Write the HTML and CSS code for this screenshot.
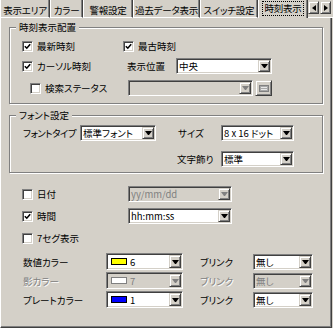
FILE: index.html
```html
<!DOCTYPE html>
<html lang="ja">
<head>
<meta charset="utf-8">
<link rel="stylesheet" href="styles.css">
</head>
<body>
<div class="win">
  <div class="tabs">
    <div class="tab w50">表示エリア</div>
    <div class="tab w33">カラー</div>
    <div class="tab w50">警報設定</div>
    <div class="tab w67">過去データ表示</div>
    <div class="tab w58">スイッチ設定</div>
    <div class="tab sel w50"><span class="focus">時刻表示</span></div>
    <div class="tabfill">
      <span class="arr"><span class="tri-l"></span></span>
      <span class="arr"><span class="tri-r"></span></span>
    </div>
  </div>
  <div class="panel">
    <div class="group g1">
      <div class="legend">時刻表示配置</div>
      <div class="row h14 mt6 pl12">
        <label class="chk cw101"><span class="box"><svg viewBox="0 0 7 7" width="7" height="7"><path d="M0.8 3.2 L2.8 5.2 L6.2 1.3" fill="none" stroke="#000" stroke-width="1.6"/></svg></span>最新時刻</label>
        <label class="chk"><span class="box"><svg viewBox="0 0 7 7" width="7" height="7"><path d="M0.8 3.2 L2.8 5.2 L6.2 1.3" fill="none" stroke="#000" stroke-width="1.6"/></svg></span>最古時刻</label>
      </div>
      <div class="row h16 mt5 pl12">
        <label class="chk cw105"><span class="box"><svg viewBox="0 0 7 7" width="7" height="7"><path d="M0.8 3.2 L2.8 5.2 L6.2 1.3" fill="none" stroke="#000" stroke-width="1.6"/></svg></span>カーソル時刻</label>
        <span class="lbl lw49">表示位置</span>
        <div class="combo cb96"><span class="val">中央</span><span class="dd"></span></div>
      </div>
      <div class="row h16 mt6 pl20">
        <label class="chk cw98"><span class="box"></span>検索ステータス</label>
        <div class="combo dis cb125"><span class="val"></span><span class="dd"></span></div>
        <span class="btn"><svg viewBox="0 0 10 7" width="10" height="7"><rect x="0.5" y="0.5" width="9" height="6" fill="#a8a8a8" stroke="#808080"/><path d="M2 2.5H8M2 4.5H8" stroke="#e8e8e8" stroke-width="1"/></svg></span>
      </div>
    </div>

    <div class="group g2">
      <div class="legend">フォント設定</div>
      <div class="row h16 mt4 pl13">
        <span class="lbl lw57">フォントタイプ</span>
        <div class="combo cb76"><span class="val">標準フォント</span><span class="dd"></span></div>
        <span class="lbl lw43 ml22">サイズ</span>
        <div class="combo cb73"><span class="val">8 x 16 ドット</span><span class="dd"></span></div>
      </div>
      <div class="row h16 mt10 pl167">
        <span class="lbl lw44">文字飾り</span>
        <div class="combo cb73"><span class="val">標準</span><span class="dd"></span></div>
      </div>
    </div>

    <div class="row h16 mt13 pl21">
      <label class="chk cw106"><span class="box"></span>日付</label>
      <div class="combo dis cb104"><span class="val">yy/mm/dd</span><span class="dd"></span></div>
    </div>
    <div class="row h16 mt6 pl21">
      <label class="chk cw106"><span class="box"><svg viewBox="0 0 7 7" width="7" height="7"><path d="M0.8 3.2 L2.8 5.2 L6.2 1.3" fill="none" stroke="#000" stroke-width="1.6"/></svg></span>時間</label>
      <div class="combo cb104"><span class="val">hh:mm:ss</span><span class="dd"></span></div>
    </div>
    <div class="row h14 mt7 pl21">
      <label class="chk"><span class="box"></span>7セグ表示</label>
    </div>

    <div class="row h17 mt8 pl22">
      <span class="lbl lw83">数値カラー</span>
      <div class="combo cb77 tall"><span class="val"><span class="sw yellow"></span>6</span><span class="dd"></span></div>
      <span class="lbl lw53 ml17">ブリンク</span>
      <div class="combo cb60"><span class="val">無し</span><span class="dd"></span></div>
    </div>
    <div class="row h17 mt2 pl22">
      <span class="lbl lw83 off">影カラー</span>
      <div class="combo dis cb77 tall"><span class="val"><span class="sw white"></span>7</span><span class="dd"></span></div>
      <span class="lbl lw53 ml17 off">ブリンク</span>
      <div class="combo dis cb60"><span class="val">無し</span><span class="dd"></span></div>
    </div>
    <div class="row h17 mt2 pl22">
      <span class="lbl lw83">プレートカラー</span>
      <div class="combo cb77 tall"><span class="val"><span class="sw blue"></span>1</span><span class="dd"></span></div>
      <span class="lbl lw53 ml17">ブリンク</span>
      <div class="combo cb60"><span class="val">無し</span><span class="dd"></span></div>
    </div>
  </div>
</div>
</body>
</html>
```

FILE: styles.css
```css
* { box-sizing: border-box; }
html, body { margin: 0; padding: 0; }
body {
  background: #d4d0c8;
  font-family: "Noto Sans CJK JP", "Noto Sans", sans-serif;
  font-size: 9.5px;
  line-height: 12px;
  color: #000;
  font-feature-settings: "palt";
}
.win {
  width: 333px;
  height: 328px;
  overflow: hidden;
  background: #d4d0c8;
}

/* tabs */
.tabs {
  display: flex;
  height: 18px;
}
.tab {
  flex: none;
  height: 18px;
  padding-top: 2px;
  border-left: 1px solid #fff;
  border-right: 1px solid #404040;
  border-bottom: 1px solid #fff;
  box-shadow: inset -1px 0 0 #808080;
  display: flex;
  justify-content: center;
  align-items: center;
  white-space: nowrap;
  letter-spacing: -0.2px;
}
.tab.sel {
  border-bottom: none;
  padding-top: 1px;
  align-items: flex-start;
}
.focus {
  display: block;
  height: 15px;
  padding: 0 1px;
  border: 1px dotted #000;
  line-height: 13px;
}
.w50 { width: 50px; }
.w33 { width: 33px; }
.w67 { width: 67px; }
.w58 { width: 58px; }
.tabfill {
  flex: 1;
  height: 18px;
  border-bottom: 1px solid #fff;
  display: flex;
  align-items: flex-start;
  gap: 1px;
  padding-top: 1px;
}
.arr {
  width: 11px;
  height: 13px;
  background: #d4d0c8;
  border: 1px solid;
  border-color: #d4d0c8 #404040 #404040 #d4d0c8;
  box-shadow: inset 1px 1px 0 #fff, inset -1px -1px 0 #808080;
  display: flex;
  align-items: center;
  justify-content: center;
}
.tri-l {
  width: 0; height: 1px;
  border-top: 3px solid transparent;
  border-bottom: 3px solid transparent;
  border-right: 4px solid #000;
}
.tri-r {
  width: 0; height: 1px;
  border-top: 3px solid transparent;
  border-bottom: 3px solid transparent;
  border-left: 4px solid #000;
}

/* panel */
.panel {
  width: 332px;
  height: 310px;
  border-left: 1px solid #fff;
  border-right: 1px solid #404040;
  border-bottom: 1px solid #404040;
  box-shadow: inset -1px -1px 0 #808080;
  overflow: hidden;
}
.group {
  width: 314px;
  margin-left: 8px;
  border: 1px solid #808080;
  box-shadow: inset 1px 1px 0 #fff, 1px 1px 0 #fff;
}
.g1 { margin-top: 9px; height: 77px; }
.g2 { margin-top: 11px; height: 58px; }
.legend {
  width: fit-content;
  height: 12px;
  margin-top: -7px;
  margin-left: 6px;
  padding: 0 3px;
  background: #d4d0c8;
  white-space: nowrap;
}

/* rows */
.row {
  display: flex;
  align-items: center;
  white-space: nowrap;
}
.h14 { height: 14px; }
.h16 { height: 16px; }
.h17 { height: 17px; }
.mt2 { margin-top: 2px; }
.mt4 { margin-top: 4px; }
.mt5 { margin-top: 5px; }
.mt6 { margin-top: 6px; }
.mt7 { margin-top: 7px; }
.mt8 { margin-top: 8px; }
.mt10 { margin-top: 10px; }
.mt13 { margin-top: 13px; }
.pl12 { padding-left: 12px; }
.pl13 { padding-left: 13px; }
.pl20 { padding-left: 20px; }
.pl21 { padding-left: 21px; }
.pl22 { padding-left: 22px; }
.pl167 { padding-left: 167px; }
.ml17 { margin-left: 17px; }
.ml22 { margin-left: 22px; }

.chk {
  display: flex;
  align-items: center;
  flex: none;
}
.cw98 { width: 98px; }
.cw101 { width: 101px; }
.cw105 { width: 105px; }
.cw106 { width: 106px; }
.box {
  width: 11px;
  height: 11px;
  margin-right: 4px;
  background: #fff;
  border: 1px solid;
  border-color: #808080 #fff #fff #808080;
  box-shadow: inset 1px 1px 0 #404040, inset -1px -1px 0 #d4d0c8;
  display: flex;
  align-items: center;
  justify-content: center;
  flex: none;
}
.box svg { display: block; }

.lbl { flex: none; }
.lw43 { width: 43px; }
.lw44 { width: 44px; }
.lw49 { width: 49px; }
.lw53 { width: 53px; }
.lw57 { width: 57px; letter-spacing: -0.5px; }
.lw83 { width: 83px; }
.off { color: #808080; text-shadow: 1px 1px 0 #fff; }

/* combo box */
.combo {
  flex: none;
  display: flex;
  height: 16px;
  padding: 1px;
  background: #fff;
  border: 1px solid;
  border-color: #808080 #fff #fff #808080;
  box-shadow: inset 1px 1px 0 #404040, inset -1px -1px 0 #d4d0c8;
}
.combo.tall { height: 17px; }
.combo.dis { background: #d4d0c8; }
.cb60 { width: 60px; }
.cb73 { width: 73px; }
.cb76 { width: 76px; }
.cb77 { width: 77px; }
.cb96 { width: 96px; }
.cb104 { width: 104px; }
.cb125 { width: 125px; }
.val {
  flex: 1;
  min-width: 0;
  display: flex;
  align-items: center;
  padding-left: 1px;
  line-height: 12px;
  white-space: nowrap;
}
.dis .val { color: #808080; }
.dd {
  flex: none;
  width: 12px;
  height: 100%;
  background: #d4d0c8;
  border: 1px solid;
  border-color: #d4d0c8 #404040 #404040 #d4d0c8;
  box-shadow: inset 1px 1px 0 #fff, inset -1px -1px 0 #808080;
  display: flex;
  align-items: center;
  justify-content: center;
}
.dd::after {
  content: "";
  width: 1px;
  height: 0;
  border-left: 3px solid transparent;
  border-right: 3px solid transparent;
  border-top: 4px solid #000;
}
.dis .dd::after { border-top-color: #808080; }

.sw {
  width: 16px;
  height: 7px;
  margin: 0 3px 0 2px;
  border: 1px solid #000;
  flex: none;
}
.yellow { background: #ffff00; }
.blue { background: #0000ff; }
.white { background: #fff; border-color: #808080; }

.btn {
  flex: none;
  width: 17px;
  height: 16px;
  margin-left: 2px;
  background: #d4d0c8;
  border: 1px solid;
  border-color: #d4d0c8 #404040 #404040 #d4d0c8;
  box-shadow: inset 1px 1px 0 #fff, inset -1px -1px 0 #808080;
  display: flex;
  align-items: center;
  justify-content: center;
}
.btn svg { display: block; }
```
